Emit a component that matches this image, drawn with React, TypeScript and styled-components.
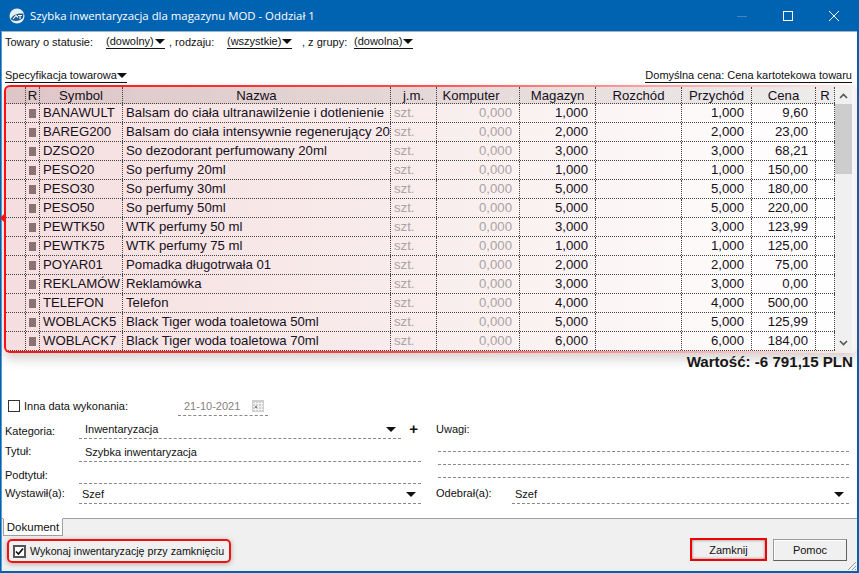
import React from 'react'
import styled, { createGlobalStyle } from 'styled-components'

const GlobalStyle = createGlobalStyle`
  html, body {
    margin: 0;
    padding: 0;
    background: #fff;
  }
  body {
    font-family: "Liberation Sans", Arial, sans-serif;
    font-size: 11px;
    color: #111;
    overflow: hidden;
  }
`

const Window = styled.div`
  width: 859px;
  height: 573px;
  box-sizing: border-box;
  display: flex;
  flex-direction: column;
  background: #0063b1;
  padding: 0 2px 2px 1px;
`

const TitleBar = styled.div`
  height: 31px;
  flex: none;
  display: flex;
  align-items: center;
  padding-left: 8px;
  color: #fff;
  font-family: "Open Sans", sans-serif;
  font-size: 11.4px;
`

const TitleText = styled.span`
  flex: 1;
  margin-left: 5px;
`

const WinButton = styled.div`
  width: 46px;
  height: 31px;
  display: flex;
  align-items: center;
  justify-content: center;
`

const Client = styled.div`
  flex: 1;
  min-height: 0;
  display: flex;
  flex-direction: column;
  background: #fff;
  border-top: 1px solid #9fb4c6;
  border-left: 1px solid #5a9bd0;
`

const Filters = styled.div`
  height: 16px;
  padding: 2px 0 0 3px;
  display: flex;
  align-items: center;
`

const FilterLabel = styled.span<{ $width: number; $pad?: number }>`
  width: ${p => p.$width}px;
  padding-left: ${p => p.$pad ?? 0}px;
  box-sizing: border-box;
  flex: none;
`

const Drop = styled.span<{ $width: number }>`
  width: ${p => p.$width}px;
  flex: none;
  box-sizing: border-box;
  border-bottom: 1px solid #111;
  display: flex;
  align-items: center;
  justify-content: space-between;
  line-height: 13px;
`

const Arrow = styled.i`
  width: 0;
  height: 0;
  flex: none;
  border-left: 5px solid transparent;
  border-right: 5px solid transparent;
  border-top: 5px solid #111;
`

const SpecRow = styled.div`
  margin-top: 18px;
  height: 15px;
  padding: 0 5px 0 3px;
  display: flex;
  align-items: flex-end;
  justify-content: space-between;
`

const LinkText = styled.span`
  border-bottom: 1px solid #111;
  line-height: 13px;
  display: flex;
  align-items: center;
`

const FrameWrap = styled.div`
  position: relative;
  margin: 2px 0 0 2px;
`

// the small pointer that sticks out of the red frame towards the window edge
const Notch = styled.span`
  position: absolute;
  left: -4px;
  top: 129px;
  width: 0;
  height: 0;
  border-top: 4px solid transparent;
  border-bottom: 4px solid transparent;
  border-right: 4px solid #f01515;
`

const Frame = styled.div`
  height: 268px;
  box-sizing: border-box;
  display: flex;
  border: 2px solid transparent;
  border-radius: 6px;
  background:
    linear-gradient(90deg, #f5dedf 0%, #f9eded 50%, #fdfafa 85%, #fff 100%) padding-box,
    linear-gradient(90deg, #f11 0%, #f44 45%, #fbb 85%, #fee 100%) border-box;
  box-shadow: 0 6px 12px rgba(110, 90, 90, 0.28);
  overflow: hidden;
  font-family: "Liberation Sans", Arial, sans-serif;
  font-size: 13.2px;
`

const Grid = styled.div`
  flex: 1;
  min-width: 0;
`

const Row = styled.div<{ $header?: boolean }>`
  display: grid;
  grid-template-columns: 20px 14px 83px 268px 46px 83px 76px 86px 70px 64px 19px;
  height: ${p => (p.$header ? '17px' : '19px')};
  box-sizing: border-box;
  border-bottom: 1px dotted #444;
  background: ${p =>
    p.$header ? 'linear-gradient(90deg, rgba(110,80,80,.17), rgba(120,110,110,.13))' : 'transparent'};
`

const Cell = styled.div<{ $align?: string; $muted?: boolean; $pad?: number }>`
  border-right: 1px dotted #444;
  box-sizing: border-box;
  line-height: 17px;
  white-space: nowrap;
  overflow: hidden;
  text-align: ${p => p.$align || 'left'};
  padding: 0 ${p => (p.$align === 'right' ? p.$pad ?? 6 : 0)}px 0 ${p => (p.$align === 'right' ? 0 : p.$pad ?? 0)}px;
  color: ${p => (p.$muted ? '#aaa3a3' : '#16101a')};
`

const HeadCell = styled(Cell)<{ $shift?: number }>`
  text-align: center;
  padding: 0 ${p => p.$shift ?? 0}px 0 0;
  line-height: 18px;
  position: relative;
`

const SortMark = styled.span`
  position: absolute;
  right: 4px;
  top: 7px;
  width: 0;
  height: 0;
  border-left: 3px solid transparent;
  border-right: 3px solid transparent;
  border-bottom: 5px solid #e4e4e4;
`

const Marker = styled.div`
  width: 7px;
  height: 9px;
  margin: 5px 0 0 3px;
  background: #8b7373;
`

const Scroll = styled.div`
  width: 17px;
  flex: none;
  border-right: 3px solid #f6f6f6;
  background: #f0f0f0;
  display: flex;
  flex-direction: column;
  align-items: center;
`

const ScrollBtn = styled.div`
  height: 17px;
  flex: none;
  display: flex;
  align-items: center;
  justify-content: center;
`

const Thumb = styled.div`
  width: 100%;
  height: 70px;
  flex: none;
  background: #cdcdcd;
`

const ScrollGap = styled.div`
  flex: 1;
`

const Total = styled.div`
  height: 21px;
  padding-right: 4px;
  text-align: right;
  font-family: "Liberation Sans", Arial, sans-serif;
  font-weight: 700;
  font-size: 15.1px;
  line-height: 18px;
  color: #111;
`

const DateRow = styled.div`
  margin-top: 22px;
  height: 20px;
  display: flex;
  align-items: center;
  padding-left: 6px;
`

const Box = styled.span`
  width: 12px;
  height: 12px;
  flex: none;
  box-sizing: border-box;
  border: 1px solid #333;
  background: #fff;
  display: inline-flex;
  align-items: center;
  justify-content: center;
`

const DateLabel = styled.span`
  width: 154px;
  margin-left: 4px;
  flex: none;
`

const DateField = styled.div`
  width: 90px;
  height: 20px;
  box-sizing: border-box;
  border-bottom: 1px dashed #888;
  padding-left: 6px;
  display: flex;
  align-items: center;
  justify-content: space-between;
  color: #8a8080;
`

const CalendarIcon = styled.svg`
  margin-right: 4px;
`

const Columns = styled.div`
  display: grid;
  grid-template-columns: 425px 1fr;
  column-gap: 9px;
  flex: 1;
`

const Col = styled.div`
  display: flex;
  flex-direction: column;
  min-width: 0;
`

const FieldRow = styled.div<{ $height: number }>`
  height: ${p => p.$height}px;
  display: flex;
  align-items: flex-end;
  flex: none;
`

const FieldLabel = styled.span<{ $width: number; $left?: number; $bottom?: number }>`
  width: ${p => p.$width}px;
  padding: 0 0 ${p => p.$bottom ?? 3}px ${p => p.$left ?? 3}px;
  box-sizing: border-box;
  flex: none;
`

const FieldValue = styled.div<{ $pad?: number; $endGap?: number }>`
  flex: 1;
  box-sizing: border-box;
  border-bottom: 1px dashed #888;
  height: 18px;
  padding: 0 0 1px ${p => p.$pad ?? 6}px;
  margin-right: ${p => p.$endGap ?? 6}px;
  display: flex;
  align-items: center;
  justify-content: space-between;
  line-height: 15px;
  position: relative;
  & > i {
    margin-right: 5px;
  }
`

const Plus = styled.span`
  position: absolute;
  right: -17px;
  top: 0;
  font-weight: 700;
  font-size: 15px;
  line-height: 15px;
`

const NoteLine = styled.div`
  height: 13px;
  flex: none;
  box-sizing: border-box;
  border-bottom: 1px dashed #888;
  margin: 0 8px 0 2px;
`

const NoteLabel = styled.div`
  height: 23px;
  padding: 7px 0 0 0;
  box-sizing: border-box;
  flex: none;
`

const FooterArea = styled.div`
  height: 52px;
  flex: none;
  background: #f0f0f0;
  border-top: 1px solid #a0a0a0;
  position: relative;
  display: flex;
  align-items: flex-start;
  justify-content: space-between;
`

const FooterLeft = styled.div`
  display: flex;
  flex-direction: column;
  padding-left: 1px;
`

const Tab = styled.div`
  width: 60px;
  height: 18px;
  margin-top: -1px;
  box-sizing: border-box;
  background: #fff;
  border: 1px solid #a0a0a0;
  border-top: 1px solid #fff;
  text-align: center;
  line-height: 17px;
  font-size: 11.5px;
`

const ExecuteBox = styled.label`
  margin: 3px 0 0 4px;
  width: 224px;
  height: 24px;
  box-sizing: border-box;
  border: 2px solid #f01010;
  border-radius: 5px;
  box-shadow: 0 1px 5px rgba(80, 80, 80, 0.45);
  display: flex;
  align-items: center;
  gap: 4px;
  padding-left: 4px;
  white-space: nowrap;
  font-size: 10.7px;
`

const CheckBox = styled(Box)`
  width: 13px;
  height: 13px;
  border: 2px solid #555;
`

const Buttons = styled.div`
  display: flex;
  align-items: flex-start;
  gap: 6px;
  padding: 20px 10px 0 0;
`

const Btn = styled.button<{ $active?: boolean }>`
  width: ${p => (p.$active ? '77px' : '74px')};
  height: ${p => (p.$active ? '23px' : '22px')};
  margin-top: ${p => (p.$active ? '-1px' : '0')};
  box-sizing: border-box;
  font: inherit;
  color: #111;
  background: #f0f0f0;
  padding: 0;
  border: ${p => (p.$active ? '2px solid #f00000' : '1px solid #9a9a9a')};
  border-right-color: ${p => (p.$active ? '#f00000' : '#606060')};
  border-bottom-color: ${p => (p.$active ? '#f00000' : '#606060')};
  box-shadow: ${p => (p.$active ? 'inset 0 0 3px #777' : 'inset 1px 1px 0 #fff')};
`

const Grip = styled.svg`
  position: absolute;
  right: 0;
  bottom: 0;
`

type Item = [string, string, string, string]

const items: Item[] = [
  ['BANAWULT', 'Balsam do ciała ultranawilżenie i dotlenienie', '1,000', '9,60'],
  ['BAREG200', 'Balsam do ciała intensywnie regenerujący 20', '2,000', '23,00'],
  ['DZSO20', 'So dezodorant perfumowany 20ml', '3,000', '68,21'],
  ['PESO20', 'So perfumy 20ml', '1,000', '150,00'],
  ['PESO30', 'So perfumy 30ml', '5,000', '180,00'],
  ['PESO50', 'So perfumy 50ml', '5,000', '220,00'],
  ['PEWTK50', 'WTK perfumy 50 ml', '3,000', '123,99'],
  ['PEWTK75', 'WTK perfumy 75 ml', '1,000', '125,00'],
  ['POYAR01', 'Pomadka długotrwała 01', '2,000', '75,00'],
  ['REKLAMÓW', 'Reklamówka', '3,000', '0,00'],
  ['TELEFON', 'Telefon', '4,000', '500,00'],
  ['WOBLACK5', 'Black Tiger woda toaletowa 50ml', '5,000', '125,99'],
  ['WOBLACK7', 'Black Tiger woda toaletowa 70ml', '6,000', '184,00'],
]

const App = () => (
  <>
    <GlobalStyle />
    <Window>
      <TitleBar>
        <svg width="16" height="16" viewBox="0 0 16 16">
          <circle cx="8" cy="8" r="7.5" fill="#e6eff6" />
          <path d="M1.5 11 C4 6.5 9 5 14.5 5.5 L14 10 C10 13.5 5 14 1.5 11Z" fill="#1f5d8f" />
          <path d="M4 11 L7 7.5 L9 9.5 M9 7.5 H13 M11 7.5 V11" stroke="#fff" strokeWidth="1.1" fill="none" />
        </svg>
        <TitleText>Szybka inwentaryzacja dla magazynu MOD - Oddział 1</TitleText>
        <WinButton>
          <svg width="10" height="10" viewBox="0 0 10 10">
            <path d="M0 5.5H10" stroke="#3f88c4" strokeWidth="1" />
          </svg>
        </WinButton>
        <WinButton>
          <svg width="10" height="10" viewBox="0 0 10 10">
            <rect x="0.5" y="0.5" width="9" height="9" fill="none" stroke="#fff" strokeWidth="1" />
          </svg>
        </WinButton>
        <WinButton>
          <svg width="10" height="10" viewBox="0 0 10 10">
            <path d="M0 0L10 10M10 0L0 10" stroke="#fff" strokeWidth="1" />
          </svg>
        </WinButton>
      </TitleBar>
      <Client>
        <Filters>
          <FilterLabel $width={101}>Towary o statusie:</FilterLabel>
          <Drop $width={59}>(dowolny)<Arrow /></Drop>
          <FilterLabel $width={62} $pad={4}>, rodzaju:</FilterLabel>
          <Drop $width={65}>(wszystkie)<Arrow /></Drop>
          <FilterLabel $width={62} $pad={10}>, z grupy:</FilterLabel>
          <Drop $width={59}>(dowolna)<Arrow /></Drop>
        </Filters>
        <SpecRow>
          <LinkText>Specyfikacja towarowa<Arrow /></LinkText>
          <LinkText>Domyślna cena: Cena kartotekowa towaru</LinkText>
        </SpecRow>
        <FrameWrap>
          <Notch />
          <Frame>
            <Grid>
              <Row $header>
                <HeadCell />
                <HeadCell>R</HeadCell>
                <HeadCell>Symbol</HeadCell>
                <HeadCell>Nazwa</HeadCell>
                <HeadCell>j.m.</HeadCell>
                <HeadCell $shift={14}>Komputer<SortMark /></HeadCell>
                <HeadCell>Magazyn</HeadCell>
                <HeadCell>Rozchód</HeadCell>
                <HeadCell>Przychód</HeadCell>
                <HeadCell>Cena</HeadCell>
                <HeadCell>R</HeadCell>
              </Row>
              {items.map(([symbol, name, qty, price]) => (
                <Row key={symbol}>
                  <Cell />
                  <Cell><Marker /></Cell>
                  <Cell $pad={3}>{symbol}</Cell>
                  <Cell $pad={3}>{name}</Cell>
                  <Cell $muted $pad={3}>szt.</Cell>
                  <Cell $muted $align="right" $pad={7}>0,000</Cell>
                  <Cell $align="right" $pad={7}>{qty}</Cell>
                  <Cell />
                  <Cell $align="right" $pad={7}>{qty}</Cell>
                  <Cell $align="right" $pad={7}>{price}</Cell>
                  <Cell />
                </Row>
              ))}
            </Grid>
            <Scroll>
              <ScrollBtn>
                <svg width="9" height="6" viewBox="0 0 9 6">
                  <path d="M1 5L4.5 1.5L8 5" stroke="#555" strokeWidth="1.6" fill="none" />
                </svg>
              </ScrollBtn>
              <Thumb />
              <ScrollGap />
              <ScrollBtn>
                <svg width="9" height="6" viewBox="0 0 9 6">
                  <path d="M1 1L4.5 4.5L8 1" stroke="#555" strokeWidth="1.6" fill="none" />
                </svg>
              </ScrollBtn>
            </Scroll>
          </Frame>
        </FrameWrap>
        <Total>Wartość: -6 791,15 PLN</Total>
        <DateRow>
          <Box />
          <DateLabel>Inna data wykonania:</DateLabel>
          <DateField>
            21-10-2021
            <CalendarIcon width="12" height="12" viewBox="0 0 12 12">
              <rect width="12" height="12" fill="#cfcfcf" />
              <path d="M1 3.5H11M1 6.5H11M1 9.5H11M3.5 2V11M6.5 2V11M9.5 2V11" stroke="#f2f2f2" strokeWidth="1" />
              <rect x="3" y="6" width="2" height="2" fill="#888" />
            </CalendarIcon>
          </DateField>
        </DateRow>
        <Columns>
          <Col>
            <FieldRow $height={23}>
              <FieldLabel $width={77} $bottom={2}>Kategoria:</FieldLabel>
              <FieldValue $endGap={26}>Inwentaryzacja<Arrow /><Plus>+</Plus></FieldValue>
            </FieldRow>
            <FieldRow $height={23}>
              <FieldLabel $width={77} $bottom={5}>Tytuł:</FieldLabel>
              <FieldValue>Szybka inwentaryzacja</FieldValue>
            </FieldRow>
            <FieldRow $height={22}>
              <FieldLabel $width={77}>Podtytuł:</FieldLabel>
              <FieldValue />
            </FieldRow>
            <FieldRow $height={20}>
              <FieldLabel $width={77} $bottom={5}>Wystawił(a):</FieldLabel>
              <FieldValue $pad={3}>Szef<Arrow /></FieldValue>
            </FieldRow>
          </Col>
          <Col>
            <NoteLabel>Uwagi:</NoteLabel>
            <NoteLine />
            <NoteLine />
            <NoteLine />
            <FieldRow $height={26}>
              <FieldLabel $width={76} $left={0} $bottom={5}>Odebrał(a):</FieldLabel>
              <FieldValue $pad={3} $endGap={8}>Szef<Arrow /></FieldValue>
            </FieldRow>
          </Col>
        </Columns>
        <FooterArea>
          <FooterLeft>
            <Tab>Dokument</Tab>
            <ExecuteBox>
              <CheckBox>
                <svg width="9" height="9" viewBox="0 0 9 9">
                  <path d="M1 4.5L3.5 7L8 1.5" stroke="#111" strokeWidth="1.7" fill="none" />
                </svg>
              </CheckBox>
              Wykonaj inwentaryzację przy zamknięciu
            </ExecuteBox>
          </FooterLeft>
          <Buttons>
            <Btn $active>Zamknij</Btn>
            <Btn>Pomoc</Btn>
          </Buttons>
          <Grip width="12" height="12" viewBox="0 0 12 12">
            <path d="M11 3L3 11M11 7L7 11M11 10L10 11" stroke="#999" strokeWidth="1" />
          </Grip>
        </FooterArea>
      </Client>
    </Window>
  </>
)

export default App
